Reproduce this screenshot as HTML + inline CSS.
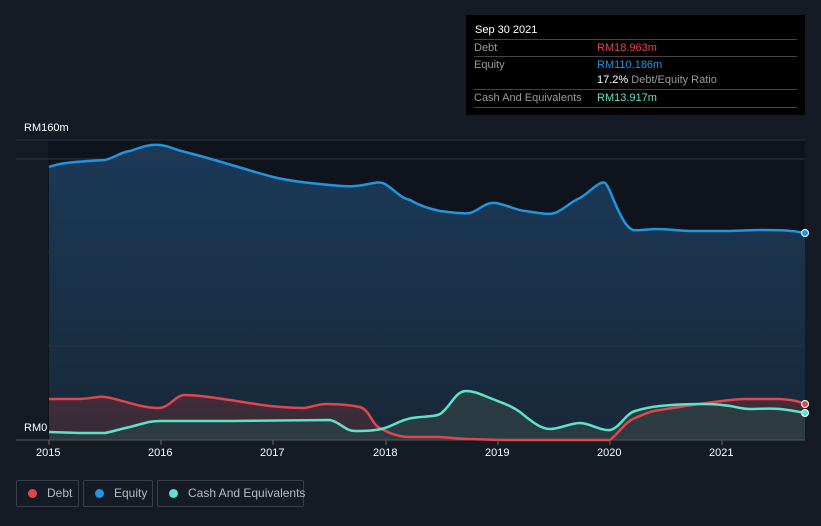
<!DOCTYPE html>
<html><head><style>
body{margin:0;width:821px;height:526px;background:#151b25;font-family:"Liberation Sans",sans-serif;overflow:hidden;position:relative}
.tt{position:absolute;left:466px;top:15px;width:339px;height:100px;background:#000;color:#fff;font-size:11px}
.tt .r{position:absolute;left:8px;right:8px;border-top:1px solid #444;height:17px;line-height:17px;color:#999}
.lg{position:absolute;top:480px;height:27px;border:1px solid #3a404a;border-radius:2px;color:#bbb;font-size:12px;line-height:25px;box-sizing:border-box;white-space:nowrap}
.lg i{display:inline-block;width:9px;height:9px;border-radius:50%;margin:0 10px 0 11px;vertical-align:-1px}
.ax{position:absolute;color:#fff;font-size:11px}
</style></head><body>
<svg width="821" height="526" style="position:absolute;left:0;top:0">
<defs>
<linearGradient id="eg" x1="0" y1="0" x2="0" y2="1"><stop offset="0" stop-color="#1b3a58"/><stop offset="1" stop-color="#172838"/></linearGradient>
<linearGradient id="dg" x1="0" y1="0" x2="0" y2="1"><stop offset="0" stop-color="#4a2c3a"/><stop offset="1" stop-color="#3a2c36"/></linearGradient>
</defs>
<rect x="48" y="140" width="757" height="300" fill="#0f141c"/>
<path d="M49,167 C60,163 70,162 105,160 C115,158 120,152 130,151 C145,146 150,144 160,145 C170,146 175,150 185,152 C210,158 240,168 273,177 C290,181 300,182 310,183 C330,185 345,187 355,186 C370,185 378,180 385,184 C395,190 400,198 410,200 C420,206 430,209 440,211 C455,213 465,214 470,213 C480,210 485,202 495,203 C505,204 515,210 525,211 C540,213 548,215 555,213 C565,209 570,202 580,198 C590,192 600,180 605,183 C610,185 620,225 633,230 C640,231 650,229 655,229 C670,229 680,231 690,231 C705,231 715,231 722,231 C740,231 750,230 760,230 C780,230 790,230 805,233 L805,440 L49,440 Z" fill="url(#eg)"/>
<path d="M49,399 L80,399 C95,398 100,396 105,397 C120,399 140,408 158,408 C170,408 175,395 185,395 C200,395 215,398 230,400 C250,403 260,405 270,406 C290,408 300,408 305,408 C315,406 320,404 325,404 C340,404 350,405 360,407 C370,410 372,425 380,428 C390,434 400,437 410,437 L440,437 C455,438 462,439 470,439 L500,440 L610,440 C620,432 625,422 635,418 C645,414 650,411 660,410 C680,407 690,405 700,404 C720,401 735,399 745,399 L780,399 C795,400 800,402 805,404 L805,440 L49,440 Z" fill="url(#dg)" opacity="0.85"/>
<path d="M49,432 L80,433 L105,433 C115,431 120,429 130,427 C145,423 150,421 160,421 L230,421 L330,420 C340,422 345,431 355,431 C365,431 375,431 385,428 C395,425 400,420 412,418 C425,416 435,417 440,414 C450,408 455,391 466,391 C475,391 482,395 490,398 C505,404 512,406 520,412 C530,420 540,429 550,429 C560,429 570,423 580,423 C590,423 600,431 610,430 C620,428 625,414 635,411 C645,408 650,407 660,406 C680,404 690,404 700,404 C710,404 715,404 722,405 C735,406 740,409 750,409 C760,409 770,408 780,409 C790,410 795,411 805,413 L805,440 L49,440 Z" fill="#2e3d45" opacity="0.9"/>
<g stroke="#2a313c" stroke-width="1"><line x1="16" y1="140" x2="805" y2="140"/><line x1="16" y1="159" x2="805" y2="159" stroke="#2f3540"/><line x1="48" y1="252" x2="805" y2="252"/><line x1="48" y1="346" x2="805" y2="346"/><line x1="16" y1="440" x2="805" y2="440" stroke="#555"/></g>
<g fill="none" stroke-width="2.5">
<path stroke="#2394df" d="M49,167 C60,163 70,162 105,160 C115,158 120,152 130,151 C145,146 150,144 160,145 C170,146 175,150 185,152 C210,158 240,168 273,177 C290,181 300,182 310,183 C330,185 345,187 355,186 C370,185 378,180 385,184 C395,190 400,198 410,200 C420,206 430,209 440,211 C455,213 465,214 470,213 C480,210 485,202 495,203 C505,204 515,210 525,211 C540,213 548,215 555,213 C565,209 570,202 580,198 C590,192 600,180 605,183 C610,185 620,225 633,230 C640,231 650,229 655,229 C670,229 680,231 690,231 C705,231 715,231 722,231 C740,231 750,230 760,230 C780,230 790,230 805,233"/>
<path stroke="#e0474c" d="M49,399 L80,399 C95,398 100,396 105,397 C120,399 140,408 158,408 C170,408 175,395 185,395 C200,395 215,398 230,400 C250,403 260,405 270,406 C290,408 300,408 305,408 C315,406 320,404 325,404 C340,404 350,405 360,407 C370,410 372,425 380,428 C390,434 400,437 410,437 L440,437 C455,438 462,439 470,439 L500,440 L610,440 C620,432 625,422 635,418 C645,414 650,411 660,410 C680,407 690,405 700,404 C720,401 735,399 745,399 L780,399 C795,400 800,402 805,404"/>
<path stroke="#5ee3cb" d="M49,432 L80,433 L105,433 C115,431 120,429 130,427 C145,423 150,421 160,421 L230,421 L330,420 C340,422 345,431 355,431 C365,431 375,431 385,428 C395,425 400,420 412,418 C425,416 435,417 440,414 C450,408 455,391 466,391 C475,391 482,395 490,398 C505,404 512,406 520,412 C530,420 540,429 550,429 C560,429 570,423 580,423 C590,423 600,431 610,430 C620,428 625,414 635,411 C645,408 650,407 660,406 C680,404 690,404 700,404 C710,404 715,404 722,405 C735,406 740,409 750,409 C760,409 770,408 780,409 C790,410 795,411 805,413"/>
</g>
<circle cx="805" cy="233" r="3.5" fill="#2394df" stroke="#fff" stroke-width="1"/>
<circle cx="805" cy="404" r="3.5" fill="#e0474c" stroke="#fff" stroke-width="1"/>
<circle cx="805" cy="413" r="3.5" fill="#5ee3cb" stroke="#fff" stroke-width="1"/>
<g stroke="#666"><line x1="49" y1="440" x2="49" y2="445"/><line x1="161" y1="440" x2="161" y2="445"/><line x1="273" y1="440" x2="273" y2="445"/><line x1="386" y1="440" x2="386" y2="445"/><line x1="498" y1="440" x2="498" y2="445"/><line x1="610" y1="440" x2="610" y2="445"/><line x1="722" y1="440" x2="722" y2="445"/></g>
</svg>
<div class="ax" style="left:24px;top:122px">RM160m</div>
<div class="ax" style="left:24px;top:422px">RM0</div>
<div class="ax" style="left:36px;top:447px">2015</div>
<div class="ax" style="left:148px;top:447px">2016</div>
<div class="ax" style="left:260px;top:447px">2017</div>
<div class="ax" style="left:373px;top:447px">2018</div>
<div class="ax" style="left:485px;top:447px">2019</div>
<div class="ax" style="left:597px;top:447px">2020</div>
<div class="ax" style="left:709px;top:447px">2021</div>
<div class="tt">
<div style="position:absolute;left:9px;top:9px">Sep 30 2021</div>
<div class="r" style="top:24px">Debt<span style="position:absolute;left:123px;color:#e0474c">RM18.963m</span></div>
<div class="r" style="top:41px">Equity<span style="position:absolute;left:123px;color:#2394df">RM110.186m</span></div>
<div style="position:absolute;left:131px;top:59px;color:#999"><b style="color:#fff;font-weight:normal">17.2%</b> Debt/Equity Ratio</div>
<div class="r" style="top:74px">Cash And Equivalents<span style="position:absolute;left:123px;color:#5ee3cb">RM13.917m</span></div>
<div style="position:absolute;left:8px;right:8px;top:92px;border-top:1px solid #444"></div>
</div>
<div class="lg" style="left:16px;width:63px"><i style="background:#e0474c"></i>Debt</div>
<div class="lg" style="left:83px;width:70px"><i style="background:#2394df"></i>Equity</div>
<div class="lg" style="left:157px;width:147px"><i style="background:#5ee3cb"></i>Cash And Equivalents</div>
</body></html>
